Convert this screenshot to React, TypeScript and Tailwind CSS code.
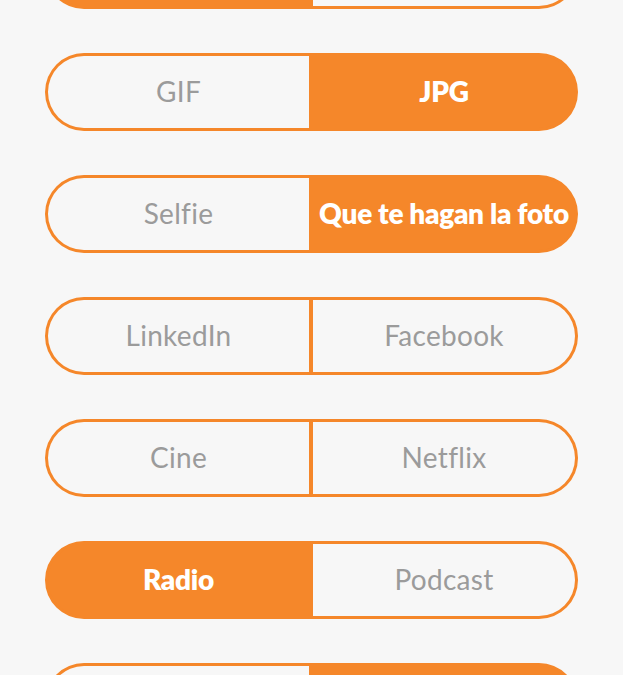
import React from "react";

type Row = { left: string; right: string; selected: "left" | "right" | "none" };

const rows: Row[] = [
  { left: "", right: "", selected: "left" },
  { left: "GIF", right: "JPG", selected: "right" },
  { left: "Selfie", right: "Que te hagan la foto", selected: "right" },
  { left: "LinkedIn", right: "Facebook", selected: "none" },
  { left: "Cine", right: "Netflix", selected: "none" },
  { left: "Radio", right: "Podcast", selected: "left" },
  { left: "", right: "", selected: "right" },
];

function Half({ label, active, side }: { label: string; active: boolean; side: "left" | "right" }) {
  const base =
    side === "left"
      ? "w-[266px] rounded-l-full border-[3px] border-r-2"
      : "w-[267px] rounded-r-full border-[3px] border-l-2";
  return (
    <div
      className={
        base +
        " h-full flex items-center justify-center pb-[3px] border-[#f5872a] " +
        (active
          ? "bg-[#f5872a] text-white font-extrabold tracking-[-0.3px]"
          : "bg-[#f7f7f7] text-[#9b9b9b] font-normal tracking-[0.3px]")
      }
    >
      <span className="text-[28px] leading-none whitespace-nowrap">{label}</span>
    </div>
  );
}

export default function App() {
  return (
    <div
      className="w-[623px] h-[675px] overflow-hidden bg-[#f7f7f7]"
      style={{ fontFamily: "Lato, 'Open Sans', sans-serif" }}
    >
      <div className="flex flex-col gap-[44px] mt-[-69px] pl-[45px]">
        {rows.map((r, i) => (
          <div key={i} className="flex h-[78px] w-[533px] shrink-0">
            <Half label={r.left} active={r.selected === "left"} side="left" />
            <Half label={r.right} active={r.selected === "right"} side="right" />
          </div>
        ))}
      </div>
    </div>
  );
}
